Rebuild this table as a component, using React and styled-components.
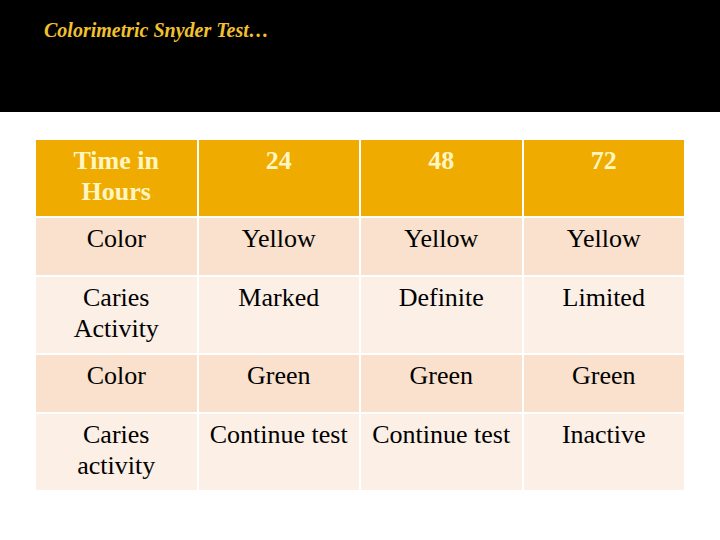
import React from 'react'
import styled, { createGlobalStyle } from 'styled-components'

const serif = `'Liberation Serif', 'Times New Roman', Times, serif`

const GlobalStyle = createGlobalStyle`
  html, body {
    margin: 0;
    padding: 0;
    background: #fff;
    font-family: ${serif};
  }
`

const Slide = styled.div`
  width: 720px;
  height: 540px;
  background: #fff;
  display: flex;
  flex-direction: column;
`

const TitleBar = styled.header`
  height: 112px;
  background: #000;
  padding: 18px 0 0 44px;
  box-sizing: border-box;
`

const Title = styled.h1`
  margin: 0;
  font-family: ${serif};
  font-size: 20px;
  font-style: italic;
  font-weight: bold;
  color: #f2c12e;
  line-height: 1.2;
`

const Table = styled.div`
  margin: 28px 0 0 36px;
  width: 648px;
  display: grid;
  grid-template-columns: repeat(4, 1fr);
  grid-template-rows: 76px 57px 76px 57px 76px;
  gap: 2px;
  background: #fff;
`

const Cell = styled.div`
  background: ${({ $kind }) =>
    $kind === 'head' ? '#efab00' : $kind === 'odd' ? '#f9e1cd' : '#fbefe6'};
  color: ${({ $kind }) => ($kind === 'head' ? '#fff6c4' : '#000')};
  font-family: ${serif};
  font-weight: ${({ $kind }) => ($kind === 'head' ? 'bold' : 'normal')};
  font-size: 26px;
  line-height: 31px;
  text-align: center;
  padding-top: 5px;
  box-sizing: border-box;
  white-space: nowrap;
`

const rows = [
  ['Time in Hours', '24', '48', '72'],
  ['Color', 'Yellow', 'Yellow', 'Yellow'],
  ['Caries Activity', 'Marked', 'Definite', 'Limited'],
  ['Color', 'Green', 'Green', 'Green'],
  ['Caries activity', 'Continue test', 'Continue test', 'Inactive'],
]

const firstCol = {
  'Time in Hours': ['Time in', 'Hours'],
  'Caries Activity': ['Caries', 'Activity'],
  'Caries activity': ['Caries', 'activity'],
}

export default function App() {
  return (
    <>
      <GlobalStyle />
      <Slide>
        <TitleBar>
          <Title>Colorimetric Snyder Test…</Title>
        </TitleBar>
        <Table>
          {rows.map((row, r) =>
            row.map((text, c) => {
              const kind = r === 0 ? 'head' : r % 2 === 1 ? 'odd' : 'even'
              const lines = c === 0 && firstCol[text]
              return (
                <Cell key={`${r}-${c}`} $kind={kind}>
                  {lines ? (
                    <>
                      {lines[0]}
                      <br />
                      {lines[1]}
                    </>
                  ) : (
                    text
                  )}
                </Cell>
              )
            })
          )}
        </Table>
      </Slide>
    </>
  )
}
